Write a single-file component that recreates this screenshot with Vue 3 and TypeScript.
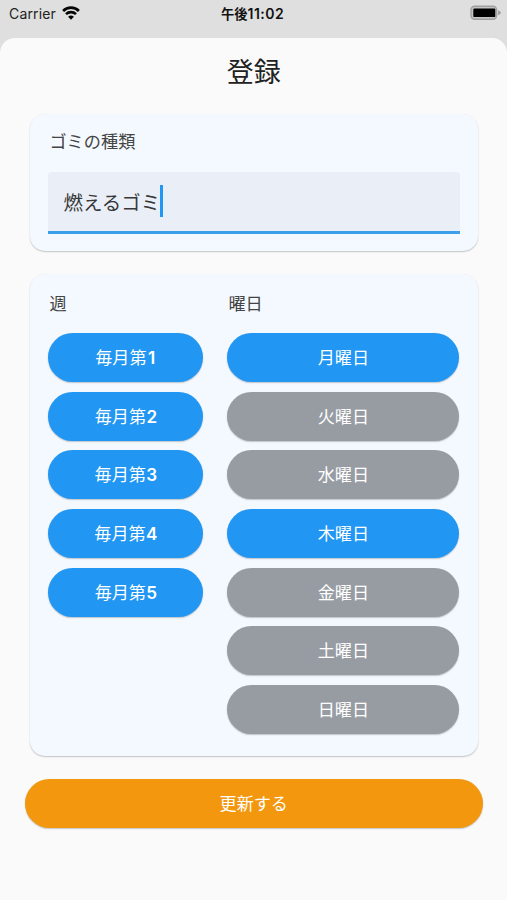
<script setup lang="ts">
import { ref } from 'vue'

interface Choice {
  label: string
  digit?: string
  selected: boolean
}

const garbageType = ref('燃えるゴミ')

const weeks = ref<Choice[]>(
  ['1', '2', '3', '4', '5'].map((digit) => ({ label: '毎月第', digit, selected: true })),
)

const days = ref<Choice[]>([
  { label: '月曜日', selected: true },
  { label: '火曜日', selected: false },
  { label: '水曜日', selected: false },
  { label: '木曜日', selected: true },
  { label: '金曜日', selected: false },
  { label: '土曜日', selected: false },
  { label: '日曜日', selected: false },
])

const toggle = (choice: Choice) => {
  choice.selected = !choice.selected
}
</script>

<template>
  <div class="screen">
    <header class="status">
      <div class="carrier">
        <span>Carrier</span>
        <svg class="wifi" viewBox="0 0 18 14" aria-hidden="true">
          <path d="M1.1 5A11 11 0 0 1 16.9 5" />
          <path d="M4 8.2A7 7 0 0 1 14 8.2" />
          <path class="dot" d="M6.1 10.8A4.2 4.2 0 0 1 11.9 10.8L9 13.8Z" />
        </svg>
      </div>
      <div class="clock">午後<span>11:02</span></div>
      <svg class="battery" viewBox="0 0 32 16" aria-hidden="true">
        <rect class="shell" x="1" y="1.2" width="25.6" height="13" rx="3.6" />
        <rect class="charge" x="3.3" y="3.5" width="22" height="8.6" rx="1.2" />
        <path class="tip" d="M28 5.2Q31 6.4 31 7.7Q31 9 28 10.2Z" />
      </svg>
    </header>

    <main class="sheet">
      <h1>登録</h1>

      <section class="card type-card">
        <label class="heading">ゴミの種類</label>
        <div class="field">
          <span>{{ garbageType }}</span><i class="caret"></i>
        </div>
      </section>

      <section class="card schedule">
        <div class="column">
          <div class="heading">週</div>
          <button
            v-for="week in weeks"
            :key="week.digit"
            class="pill"
            :class="{ selected: week.selected }"
            @click="toggle(week)"
          >{{ week.label }}<b>{{ week.digit }}</b></button>
        </div>
        <div class="column">
          <div class="heading">曜日</div>
          <button
            v-for="day in days"
            :key="day.label"
            class="pill"
            :class="{ selected: day.selected }"
            @click="toggle(day)"
          >{{ day.label }}</button>
        </div>
      </section>

      <button class="pill submit">更新する</button>
    </main>
  </div>
</template>

<style>
body {
  background: #dfdfdf;
}
</style>

<style scoped>
.screen {
  box-sizing: border-box;
  height: 900px;
  display: flex;
  flex-direction: column;
  background: #dfdfdf;
  color: #222;
  font-family: Inter, "Noto Sans CJK JP", sans-serif;
  overflow: hidden;
}

.status {
  flex: none;
  height: 37.6px;
  box-sizing: border-box;
  padding: 0 5px 10px 9px;
  display: grid;
  grid-template-columns: 212px 1fr 32px;
  align-items: center;
  font-size: 14px;
}

.carrier {
  display: flex;
  align-items: center;
  gap: 6px;
  letter-spacing: 0.15px;
}

.wifi {
  width: 18px;
  height: 14px;
  margin-top: -2px;
  fill: none;
  stroke: #050505;
  stroke-width: 2.6;
}

.wifi .dot {
  fill: #050505;
  stroke: none;
}

.clock {
  font-size: 13.3px;
  font-weight: 700;
  line-height: 20px;
  color: #111;
}

.clock span {
  font-size: 14px;
  font-weight: 600;
  letter-spacing: 0.45px;
}

.battery {
  width: 32px;
  height: 16px;
  justify-self: end;
  margin-top: -1px;
}

.shell {
  fill: #c4c4c4;
  stroke: #a0a0a0;
  stroke-width: 1.4;
}

.charge {
  fill: #000;
}

.tip {
  fill: #a0a0a0;
}

.sheet {
  flex: 1;
  display: flex;
  flex-direction: column;
  background: #fafafa;
  border-radius: 15px 15px 0 0;
  padding: 0 24.5px 0 25px;
}

h1 {
  margin: 15px 0 21.4px;
  height: 40px;
  line-height: 40px;
  text-align: center;
  font-size: 27px;
  font-weight: 400;
}

.card {
  box-sizing: border-box;
  margin: 0 5px 0 5.4px;
  padding: 0 18px;
  background: #f3f9ff;
  border-radius: 15px;
  box-shadow: 0 1px 1.5px rgba(0, 0, 0, 0.22), 0 0 1.5px rgba(0, 0, 0, 0.04);
}

.type-card {
  height: 137px;
}

.heading {
  display: block;
  height: 28px;
  line-height: 28px;
  padding: 14px 0 16px 1px;
  font-size: 17.2px;
  color: #444;
}

.field {
  box-sizing: border-box;
  height: 62.4px;
  padding: 0 15px;
  display: flex;
  align-items: center;
  background: #eaeff7;
  border-bottom: 3px solid #3b9fea;
  border-radius: 4px 4px 0 0;
  font-size: 19.5px;
  color: #383838;
}

.caret {
  width: 2.4px;
  height: 32px;
  margin-top: -1px;
  background: #2196f3;
}

.schedule {
  margin-top: 23px;
  height: 482.5px;
  display: grid;
  grid-template-columns: 155px 232px;
  column-gap: 24px;
}

.column {
  display: flex;
  flex-direction: column;
}

.column .heading {
  padding: 16px 0 15px 1px;
}

.pill {
  flex: none;
  box-sizing: border-box;
  width: 100%;
  height: 49px;
  margin: 0 0 9.67px;
  padding: 0;
  border: 0;
  border-radius: 25px;
  background: #979ca3;
  box-shadow: 0 1px 1.4px rgba(0, 0, 0, 0.22);
  color: #fff;
  font-family: inherit;
  font-size: 17.1px;
  line-height: 49px;
}

.pill b {
  display: inline-block;
  min-width: 9.6px;
  margin-left: 0.4px;
  font-weight: 600;
}

.selected {
  background: #2196f3;
}

.submit {
  margin-top: 22.5px;
  background: #f3980e;
}
</style>
